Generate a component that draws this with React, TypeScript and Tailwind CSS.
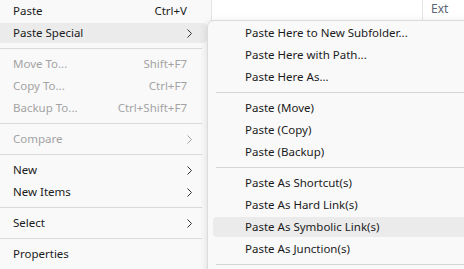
import React from "react";

type Item =
  | { kind: "sep" }
  | { kind: "item"; label: string; shortcut?: string; sub?: boolean; disabled?: boolean; active?: boolean };

const left: Item[] = [
  { kind: "item", label: "Paste", shortcut: "Ctrl+V" },
  { kind: "item", label: "Paste Special", sub: true, active: true },
  { kind: "sep" },
  { kind: "item", label: "Move To...", shortcut: "Shift+F7", disabled: true },
  { kind: "item", label: "Copy To...", shortcut: "Ctrl+F7", disabled: true },
  { kind: "item", label: "Backup To...", shortcut: "Ctrl+Shift+F7", disabled: true },
  { kind: "sep" },
  { kind: "item", label: "Compare", sub: true, disabled: true },
  { kind: "sep" },
  { kind: "item", label: "New", sub: true },
  { kind: "item", label: "New Items", sub: true },
  { kind: "sep" },
  { kind: "item", label: "Select", sub: true },
  { kind: "sep" },
  { kind: "item", label: "Properties" },
];

const right: Item[] = [
  { kind: "item", label: "Paste Here to New Subfolder..." },
  { kind: "item", label: "Paste Here with Path..." },
  { kind: "item", label: "Paste Here As..." },
  { kind: "sep" },
  { kind: "item", label: "Paste (Move)" },
  { kind: "item", label: "Paste (Copy)" },
  { kind: "item", label: "Paste (Backup)" },
  { kind: "sep" },
  { kind: "item", label: "Paste As Shortcut(s)" },
  { kind: "item", label: "Paste As Hard Link(s)" },
  { kind: "item", label: "Paste As Symbolic Link(s)", active: true },
  { kind: "item", label: "Paste As Junction(s)" },
  { kind: "sep" },
];

function Chevron({ color }: { color: string }) {
  return (
    <svg width="5" height="9" viewBox="0 0 5 9" fill="none">
      <path d="M0.5 0.5 L4.5 4.5 L0.5 8.5" stroke={color} strokeWidth="1" />
    </svg>
  );
}

export default function App() {
  return (
    <div
      className="relative w-[464px] h-[269px] overflow-hidden bg-white text-[11.5px] text-[#1b1b1b]"
      style={{ fontFamily: '"Segoe UI", "Noto Sans", sans-serif' }}
    >
      {/* file list header behind the menus */}
      <div className="absolute left-[212px] top-0 right-0 h-[20px] flex">
        <div className="flex-1" />
        <div className="w-[42px] border-l border-[#e5e5e5] pl-[8px] leading-[17px] text-[12px] text-[#5b6573]">Ext</div>
      </div>

      {/* main context menu */}
      <div className="absolute left-0 top-0 w-[212px] h-[269px] bg-[#f9f9f9] border-r border-[#e3e3e3]">
        {left.map((it, i) =>
          it.kind === "sep" ? (
            <div key={i} className="h-[9px] flex items-center mr-[9px]">
              <div className="h-px w-full bg-[#dadada]" />
            </div>
          ) : (
            <div key={i} className="h-[22px] py-px mr-[4px]">
              <div
                className={
                  "h-[20px] flex items-center pl-[13px] pr-[15px] rounded-r-[4px] " +
                  (it.active ? "bg-[#ebebeb] " : "") +
                  (it.disabled ? "text-[#a3a3a3]" : "")
                }
              >
                <span className="flex-1">{it.label}</span>
                {it.shortcut && <span className="mr-[5px]">{it.shortcut}</span>}
                {it.sub && <Chevron color={it.disabled ? "#a3a3a3" : "#333333"} />}
              </div>
            </div>
          )
        )}
      </div>

      {/* submenu */}
      <div className="absolute left-[207px] top-[20px] w-[280px] h-[270px] bg-[#f9f9f9] border border-[#dcdcdc] rounded-[7px] pt-px shadow-[0_2px_8px_rgba(0,0,0,0.12)]">
        {right.map((it, i) =>
          it.kind === "sep" ? (
            <div key={i} className="h-[9px] flex items-center ml-[8px]">
              <div className="h-px w-full bg-[#d6d6d6]" />
            </div>
          ) : (
            <div key={i} className="h-[22px] py-px ml-[5px]">
              <div
                className={
                  "h-[20px] flex items-center pl-[32px] rounded-l-[4px] " +
                  (it.active ? "bg-[#ebebeb]" : "")
                }
              >
                {it.label}
              </div>
            </div>
          )
        )}
      </div>
    </div>
  );
}
